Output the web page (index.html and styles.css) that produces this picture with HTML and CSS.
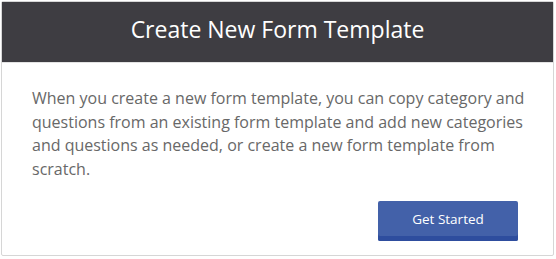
FILE: index.html
```html
<!DOCTYPE html>
<html>
<head>
<meta charset="utf-8">
<link rel="stylesheet" href="styles.css">
</head>
<body>
<div class="card">
  <div class="card-header">Create New Form Template</div>
  <div class="card-body">
    <p class="desc">When you create a new form template, you can copy category and questions from an existing form template and add new categories and questions as needed, or create a new form template from scratch.</p>
    <div class="actions">
      <button class="btn">Get Started</button>
    </div>
  </div>
</div>
</body>
</html>
```
FILE: styles.css
```css
html, body {
  margin: 0;
  padding: 0;
  background: #ffffff;
}
body {
  font-family: "Open Sans", "Noto Sans", sans-serif;
}
.card {
  margin: 1px;
  width: 551px;
  height: 253px;
  border: 1px solid #d6d6d6;
  border-radius: 2px;
  background: #fff;
  display: flex;
  flex-direction: column;
}
.card-header {
  background: #3e3d42;
  color: #ffffff;
  font-size: 23px;
  line-height: 30px;
  text-align: center;
  padding: 12px 0 18px;
  border-bottom: 1px solid #e3e3e3;
}
.card-body {
  padding: 24px 20px 0 30px;
  display: flex;
  flex-direction: column;
}
.desc {
  margin: 0;
  color: #686868;
  font-size: 16px;
  line-height: 23.5px;
}
.actions {
  display: flex;
  justify-content: flex-end;
  padding-top: 20px;
  padding-right: 15px;
}
.btn {
  width: 140px;
  height: 40px;
  border: none;
  border-radius: 2px;
  background: #4361a9;
  box-shadow: inset 0 -5px 0 #2e4d9e;
  color: #ffffff;
  font-family: "Open Sans", "Noto Sans", sans-serif;
  font-size: 13.5px;
  padding: 0 0 4px;
}
```
